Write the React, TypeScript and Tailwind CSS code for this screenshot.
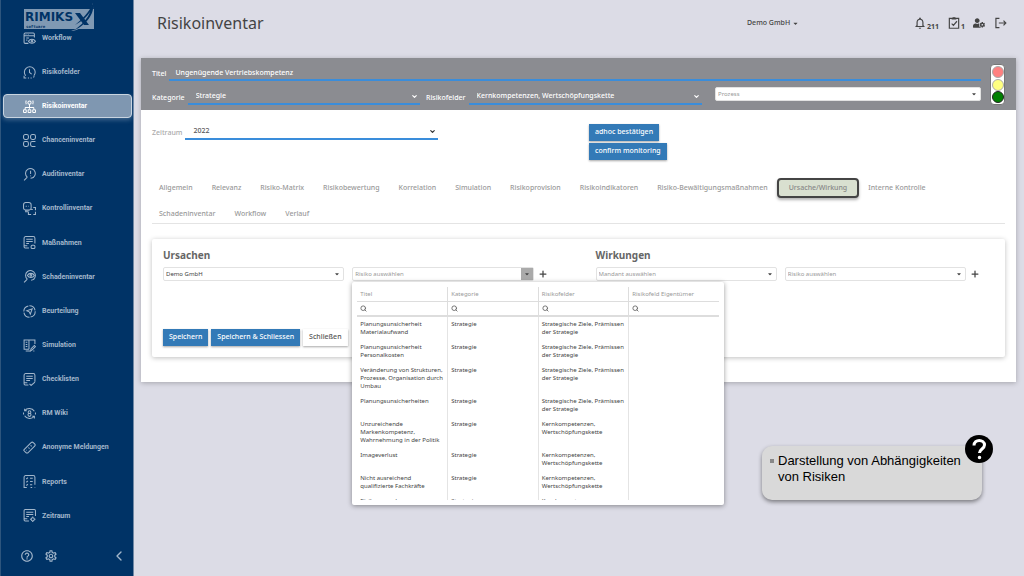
import { useState } from "react";
import type { ReactNode } from "react";
import { FaCaretDown, FaUserCog } from "react-icons/fa";
import { LuChevronDown, LuChevronLeft, LuPlus, LuSearch } from "react-icons/lu";
import {
  MdHelpOutline,
  MdNotificationsNone,
  MdOutlineSettings,
} from "react-icons/md";

const menu: { label: string; icon: ReactNode }[] = [
  {
    label: "Workflow",
    icon: (
      <>
        <path d="M10 21H4a2 2 0 0 1-2-2V4a2 2 0 0 1 2-2h15a2 2 0 0 1 2 2v6M2 7h19M5 4.6h1M9 4.6h1M6 11h5M6 15h2" />
        <path d="M10 17c3-5 10-5 13 0-3 5-10 5-13 0z" />
        <circle cx="16.500" cy="17" r="1.500" />
      </>
    ),
  },
  {
    label: "Risikofelder",
    icon: (
      <>
        <path d="M5 18a10 10 0 1 1 15 0M12 6v6l4 3M2 18v4h4M9 22h2M14 22h2M19 21l2-2" />
      </>
    ),
  },
  {
    label: "Risikoinventar",
    icon: (
      <>
        <circle cx="12" cy="5" r="3" />
        <path d="M6 1c-1 2-1 5 0 7M18 1c1 2 1 5 0 7M12 8v8M4 17v-2q0-1 1-1h14q1 0 1 1v2" />
        <rect x="1" y="18" width="5" height="5" rx="1" />
        <rect x="9.500" y="18" width="5" height="5" rx="1" />
        <rect x="18" y="18" width="5" height="5" rx="1" />
      </>
    ),
  },
  {
    label: "Chanceninventar",
    icon: (
      <>
        <rect x="1" y="1" width="9" height="9" rx="3" />
        <rect x="14" y="1" width="9" height="9" rx="3" />
        <rect x="1" y="14" width="9" height="9" rx="3" />
        <path d="M23 14h-6a3 3 0 0 0-3 3v3a3 3 0 0 0 3 3h6" />
      </>
    ),
  },
  {
    label: "Auditinventar",
    icon: (
      <>
        <path d="M8 17a9 9 0 1 1 6 2M8 17l-6 6M14 5v6M14 14v1M19 18l1-1" />
      </>
    ),
  },
  {
    label: "Kontrollinventar",
    icon: (
      <>
        <rect x="1" y="1" width="14" height="14" rx="4" />
        <path d="M5 15v3h5M19 10h4v5M23 18v5h-4M15 23h-5v-5M5 8h2M10 8h1M15 14h3" />
      </>
    ),
  },
  {
    label: "Maßnahmen",
    icon: (
      <>
        <path d="M11 22H4a2 2 0 0 1-2-2V4a3 3 0 0 1 3-3h14a3 3 0 0 1 3 3v10M6 6h12M6 10h12M6 14h5M2 18h6" />
        <rect x="15" y="17" width="7" height="6" rx="2" />
      </>
    ),
  },
  {
    label: "Schadeninventar",
    icon: (
      <>
        <path d="M8 17a9 9 0 1 1 7 2M8 17l-6 6M19 18l2-2" />
        <path d="M8 10c3-5 10-5 13 0-3 5-10 5-13 0z" />
        <circle cx="14.500" cy="10" r="1.500" />
      </>
    ),
  },
  {
    label: "Beurteilung",
    icon: (
      <>
        <circle cx="12" cy="12" r="10.500" strokeDasharray="14 2" />
        <path d="M17 7l-3.500 10-2-4.500L7 10.500z" />
      </>
    ),
  },
  {
    label: "Simulation",
    icon: (
      <>
        <path d="M11 2v17M11 19H2V2h9M11 2h11v7M5 6h3M5 10h3M5 14h3M5 22h8" />
        <path d="M14 22l1-4 6-6 2 2-6 6zM19 22h2" />
      </>
    ),
  },
  {
    label: "Checklisten",
    icon: (
      <>
        <path d="M10 22H4a2 2 0 0 1-2-2V4a3 3 0 0 1 3-3h14a3 3 0 0 1 3 3v12M6 6h12M6 10h12M6 14h7M2 18h6M12 20l3 3 7-6" />
      </>
    ),
  },
  {
    label: "RM Wiki",
    icon: (
      <>
        <path d="M3 7a11 11 0 0 1 18 1M21 17a11 11 0 0 1-18-1M1 10v4M23 10v4M3 3v4h4M21 21v-4h-4" />
        <circle cx="12" cy="9.500" r="2.500" />
        <circle cx="12" cy="14.500" r="2.800" />
      </>
    ),
  },
  {
    label: "Anonyme Meldungen",
    icon: (
      <>
        <path d="M2 16L15 3q2-2 4 0l2.500 2.500q2 2 0 4L9 22q-2 1-4-1l-3-3q-1-1 0-2zM14 8l2 2M10 12l2 2M6 17h1" />
      </>
    ),
  },
  {
    label: "Reports",
    icon: (
      <>
        <path d="M7 23H2V4a3 3 0 0 1 3-3h14a3 3 0 0 1 3 3v14M22 22v1M14 23h3M6 6l1 1 2-2M13 6h5M6 12l1 1 2-2M13 12h5M6 18l1 1 2-2M13 18h4" />
      </>
    ),
  },
  {
    label: "Zeitraum",
    icon: (
      <>
        <path d="M11 22H4a2 2 0 0 1-2-2V3a2 2 0 0 1 2-2h17a2 2 0 0 1 2 2v10M6 6h13M6 10h13M6 14h5M2 18h6" />
        <circle cx="18" cy="19" r="3" />
        <path d="M18 14v2M18 22v2M13 19h2M21 19h2" />
      </>
    ),
  },
];

const tabs = [
  "Allgemein",
  "Relevanz",
  "Risiko-Matrix",
  "Risikobewertung",
  "Korrelation",
  "Simulation",
  "Risikoprovision",
  "Risikoindikatoren",
  "Risiko-Bewältigungsmaßnahmen",
  "Ursache/Wirkung",
  "Interne Kontrolle",
  "Schadeninventar",
  "Workflow",
  "Verlauf",
];

const columns = ["Titel", "Kategorie", "Risikofelder", "Risikofeld Eigentümer"];

const risks = [
  ["Planungsunsicherheit Materialaufwand", "Strategie", "Strategische Ziele, Prämissen der Strategie"],
  ["Planungsunsicherheit Personalkosten", "Strategie", "Strategische Ziele, Prämissen der Strategie"],
  ["Veränderung von Strukturen, Prozesse, Organisation durch Umbau", "Strategie", "Strategische Ziele, Prämissen der Strategie"],
  ["Planungsunsicherheiten", "Strategie", "Strategische Ziele, Prämissen der Strategie"],
  ["Unzureichende Markenkompetenz, Wahrnehmung in der Politik", "Strategie", "Kernkompetenzen, Wertschöpfungskette"],
  ["Imageverlust", "Strategie", "Kernkompetenzen, Wertschöpfungskette"],
  ["Nicht ausreichend qualifizierte Fachkräfte", "Strategie", "Kernkompetenzen, Wertschöpfungskette"],
  ["Risiken aus der Einflussnahme", "Strategie", "Kernkompetenzen, Wertschöpfungskette"],
];

const Logo = () => (
  <svg viewBox="0 0 72 30" className="h-[30px] w-18 shrink-0" role="img" aria-label="RIMIKSX software">
    <rect y="6" width="70" height="20" fill="#8099b3" />
    <text x="1" y="18" fontFamily="DejaVu Sans" fontWeight="700" fontSize="12" fill="#003366">
      RIMIKS
    </text>
    <text x="2" y="25" fontFamily="DejaVu Sans Mono" fontWeight="700" fontSize="4" fill="#003366">
      software
    </text>
    <path d="M47 28C58 25 69 12 68 0c4 8-3 19-10 24-3 2-7 4-11 4z" fill="#8099b3" />
    <path d="M51 10h5l9 12h-5z" fill="#003366" />
    <path d="M69 0c2 11-7 22-20 28 9-6 15-13 17-19-3 5-8 9-15 13 7-6 14-12 18-22z" fill="#003366" />
  </svg>
);

const Sidebar = () => {
  const [active, setActive] = useState("Risikoinventar");

  return (
    <aside className="flex min-h-screen w-[134px] shrink-0 flex-col border-r border-l border-l-[#2d557d] border-r-[#7088a4] bg-[#003366] text-[#a3b7cb]">
      <div className="flex h-[26px] items-start pl-[23px] pt-[3px]">
        <Logo />
      </div>
      <nav className="flex flex-1 flex-col justify-between pr-px pl-0.5">
        {menu.map((item) => (
          <a
            key={item.label}
            href="#"
            onClick={() => setActive(item.label)}
            className={`flex h-6 items-center gap-1.5 rounded border pl-[19px] font-[Roboto,sans-serif] text-[7px] font-bold ${
              active === item.label
                ? "border-[#c8d4e0] bg-[#7f97b1] text-white shadow-[0_2px_4px_rgba(160,180,200,0.4)]"
                : "border-transparent"
            }`}
          >
            <svg
              viewBox="0 0 24 24"
              fill="none"
              stroke="currentColor"
              strokeWidth="1.900"
              className="size-[13px] shrink-0"
            >
              {item.icon}
            </svg>
            <span>{item.label}</span>
          </a>
        ))}
      </nav>
      <div className="flex h-12 items-center gap-2.5 pt-2 pr-1.5 pl-[19px]">
        <button aria-label="Hilfe">
          <MdHelpOutline className="size-3.5" />
        </button>
        <button aria-label="Einstellungen">
          <MdOutlineSettings className="size-3.5" />
        </button>
        <button aria-label="Menü einklappen" className="ml-auto">
          <LuChevronLeft className="size-4" />
        </button>
      </div>
    </aside>
  );
};

const TopBar = () => (
  <header className="flex h-[58px] items-start pt-[11px] pr-[9px] pl-4 text-[#444]">
    <h1 className="w-[590px] text-[16px] leading-6">Risikoinventar</h1>
    <button className="flex h-6 items-center gap-0.5 text-[7px] font-medium">
      Demo GmbH <FaCaretDown className="size-[7px]" />
    </button>
    <div className="ml-auto flex h-6 items-center gap-2">
      <button className="flex items-center" aria-label="211 Benachrichtigungen">
        <MdNotificationsNone className="size-3.5" />
        <span className="pt-2 text-[7px] font-bold">211</span>
      </button>
      <button className="flex items-center" aria-label="1 Aufgabe">
        <svg viewBox="0 0 24 24" fill="none" stroke="currentColor" strokeWidth="2" className="size-3.5">
          <path d="M4 4h16v17H4zM8 13l3 3 6-7" />
          <path d="M8 5l2-3h4l2 3v1H8z" fill="currentColor" stroke="none" />
        </svg>
        <span className="pt-2 text-[7px] font-bold">1</span>
      </button>
      <button aria-label="Benutzer">
        <FaUserCog className="size-3" />
      </button>
      <button aria-label="Abmelden">
        <svg viewBox="0 0 24 24" fill="none" stroke="currentColor" strokeWidth="2" className="size-3.5">
          <path d="M11 4H5v16h6M10 12h12M18 8l4 4-4 4" />
        </svg>
      </button>
    </div>
  </header>
);

type LineSelectProps = { id: string; label: string; value: string };

const LineSelect = ({ id, label, value }: LineSelectProps) => (
  <div className="flex items-end gap-[3px]">
    <label htmlFor={id} className="pb-px text-[7px] leading-3 font-medium">
      {label}
    </label>
    <div className="relative flex-1">
      <select
        id={id}
        className="block h-[18px] w-full appearance-none border-b-2 border-[#3a8ddb] px-2 pt-0.5 text-[7px] font-medium outline-none"
      >
        <option>{value}</option>
      </select>
      <LuChevronDown className="pointer-events-none absolute top-1.5 right-0.5 size-[7px]" strokeWidth={4} />
    </div>
  </div>
);

type BoxSelectProps = { label: string; value: string; filled?: boolean; open?: boolean };

const BoxSelect = ({ label, value, filled, open }: BoxSelectProps) => (
  <div className="relative flex-1">
    <select
      aria-label={label}
      className={`block h-3.5 w-full appearance-none rounded-xs border border-[#e2e2e2] bg-white px-0.5 text-[6px] outline-none ${
        filled ? "text-[#444]" : "text-[#999]"
      }`}
    >
      <option>{value}</option>
    </select>
    <span
      className={`pointer-events-none absolute top-px right-px flex h-3 w-3 items-center justify-center text-[#444] ${
        open ? "bg-[#aaa]" : ""
      }`}
    >
      <FaCaretDown className="size-1.5" />
    </span>
  </div>
);

const RiskHeader = () => (
  <div className="flex gap-[9px] bg-[#8b8c91] pt-1.5 pr-[11px] pb-[5px] pl-[11px] text-white">
    <div className="flex flex-1 flex-col gap-1.5">
      <div className="flex items-end gap-[3px]">
        <label htmlFor="titel" className="pb-px text-[7px] leading-3 font-medium">
          Titel
        </label>
        <input
          id="titel"
          defaultValue="Ungenügende Vertriebskompetenz"
          className="h-[17px] flex-1 border-b-2 border-[#3a8ddb] px-1.5 pt-0.5 text-[7px] font-medium outline-none"
        />
      </div>
      <div className="grid grid-cols-[268fr_276fr_273fr] gap-x-1.5">
        <LineSelect id="kategorie" label="Kategorie" value="Strategie" />
        <LineSelect id="risikofelder" label="Risikofelder" value="Kernkompetenzen, Wertschöpfungskette" />
        <div className="flex items-start pl-[7px]">
          <BoxSelect label="Prozess" value="Prozess" />
        </div>
      </div>
    </div>
    <div className="flex w-[15px] flex-col items-center justify-between rounded border border-[#777] bg-white py-px">
      <span className="size-3 rounded-full border border-[#aaa] bg-[#ff8080]" />
      <span className="size-3 rounded-full border border-[#aaa] bg-[#ffff80]" />
      <span className="size-3 rounded-full border border-[#222] bg-[#008000]" />
    </div>
  </div>
);

const blueButton =
  "h-[17px] bg-[#337ab7] px-[6px] text-[7px] font-medium text-white shadow-[0_1px_2px_rgba(0,0,0,0.35)]";

const RiskPopup = () => (
  <div className="absolute top-full left-0 z-10 mt-px w-[372px] rounded-xs bg-white px-[5px] pt-[5px] pb-[5px] shadow-[0_1px_5px_rgba(0,0,0,0.4)]">
    <div className="h-[213px] overflow-hidden">
      <table className="w-full table-fixed border-collapse text-left text-[6px] leading-2 text-[#444]">
        <thead>
          <tr className="h-3.5 border-b border-[#ddd] text-[#999]">
            {columns.map((column) => (
              <th key={column} className="border-r border-[#ddd] px-[3px] font-normal last:border-r-0">
                {column}
              </th>
            ))}
          </tr>
          <tr className="h-[15px] border-b-2 border-[#ddd]">
            {columns.map((column) => (
              <td key={column} className="border-r border-[#ddd] px-[3px] last:border-r-0">
                <button aria-label={`${column} suchen`} className="block text-[#666]">
                  <LuSearch className="size-[7px]" strokeWidth={3} />
                </button>
              </td>
            ))}
          </tr>
        </thead>
        <tbody>
          {risks.map(([title, category, field]) => (
            <tr key={title} className="align-top">
              <td className="border-r border-[#e4e4e4] px-[3px] pt-[3px] pb-1">{title}</td>
              <td className="border-r border-[#e4e4e4] px-[3px] pt-[3px] pb-1">{category}</td>
              <td className="border-r border-[#e4e4e4] px-[3px] pt-[3px] pb-1">{field}</td>
              <td />
            </tr>
          ))}
        </tbody>
      </table>
    </div>
  </div>
);

const CausePanel = () => (
  <section className="rounded-xs bg-white pt-2 pr-[25px] pb-[11px] pl-[11px] shadow-[0_1px_5px_rgba(0,0,0,0.25)]">
    <div className="grid grid-cols-2 gap-12">
      <div>
        <h2 className="text-[10px] leading-4 font-bold text-[#666]">Ursachen</h2>
        <div className="mt-1 flex items-center gap-2">
          <BoxSelect label="Mandant der Ursache" value="Demo GmbH" filled />
          <div className="relative flex flex-1">
            <BoxSelect label="Risiko der Ursache" value="Risiko auswählen" open />
            <RiskPopup />
          </div>
          <button aria-label="Ursache hinzufügen" className="-ml-1">
            <LuPlus className="size-2.5" strokeWidth={3} />
          </button>
        </div>
      </div>
      <div>
        <h2 className="text-[10px] leading-4 font-bold text-[#666]">Wirkungen</h2>
        <div className="mt-1 flex items-center gap-2">
          <BoxSelect label="Mandant der Wirkung" value="Mandant auswählen" />
          <BoxSelect label="Risiko der Wirkung" value="Risiko auswählen" />
          <button aria-label="Wirkung hinzufügen" className="-ml-1">
            <LuPlus className="size-2.5" strokeWidth={3} />
          </button>
        </div>
      </div>
    </div>
    <div className="mt-12 flex gap-[3px]">
      <button className={blueButton}>Speichern</button>
      <button className={blueButton}>Speichern &amp; Schliessen</button>
      <button className="h-[17px] bg-white px-[6px] text-[7px] font-medium text-[#555] shadow-[0_1px_2px_rgba(0,0,0,0.35)]">
        Schließen
      </button>
    </div>
  </section>
);

const Hint = () => (
  <div className="relative mt-16 mr-[34px] mb-4 w-[220px] self-end rounded-[10px] bg-[#d9d9d9] pt-[7px] pr-2 pb-[15px] pl-4 text-black shadow-[0_2px_4px_rgba(0,0,0,0.45)]">
    <ul className="list-none font-['Liberation_Sans',sans-serif] text-[13px] leading-4">
      <li className="relative">
        <span className="absolute top-1.5 -left-2 size-1 bg-[#888]" />
        Darstellung von Abhängigkeiten von Risiken
      </li>
    </ul>
    <span className="absolute -top-[11px] -right-[11px] flex size-7 items-center justify-center rounded-full bg-black">
      <svg viewBox="0 0 24 24" fill="none" stroke="#fff" strokeWidth="3" className="size-6">
        <path d="M7 8.500c0-7 10.500-6.500 10.500-.5 0 4-5 4-5 8" />
        <circle cx="12.500" cy="20.500" r="1" fill="#fff" strokeWidth="1.500" />
      </svg>
    </span>
  </div>
);

const App = () => {
  const [activeTab, setActiveTab] = useState("Ursache/Wirkung");

  return (
    <div className="flex min-h-screen bg-[#dcdce6] font-['Noto_Sans',sans-serif] text-[#444]">
      <Sidebar />
      <div className="flex min-w-0 flex-1 flex-col pr-2 pl-[7px]">
        <TopBar />
        <main className="flex flex-col">
          <div className="bg-white shadow-[0_1px_5px_rgba(0,0,0,0.25)]">
            <RiskHeader />
            <div className="px-[11px] pb-[25px]">
              <div className="grid grid-cols-[437fr_416fr] pt-3.5">
                <div className="-mt-0.5 w-[286px] text-[#aaa] [&_select]:text-[#555] [&_svg]:text-[#333]">
                  <LineSelect id="zeitraum" label="Zeitraum" value="2022" />
                </div>
                <div className="flex flex-col items-start gap-0.5">
                  <button className={blueButton}>adhoc bestätigen</button>
                  <button className={blueButton}>confirm monitoring</button>
                </div>
              </div>
              <div className="mt-[18px] flex flex-wrap items-center gap-x-[5px] gap-y-[7px] border-b border-[#e4e4e4] pr-8 text-[7px] font-medium text-[#999]">
                {tabs.map((tab) => (
                  <button
                    key={tab}
                    onClick={() => setActiveTab(tab)}
                    className={
                      activeTab === tab
                        ? "-mx-[3px] h-5 rounded border-2 border-[#444] bg-[#d9e0d0] px-2.5 text-[#888] shadow-[0_2px_3px_rgba(0,0,0,0.3)]"
                        : "h-[18px] px-[7px]"
                    }
                  >
                    {tab}
                  </button>
                ))}
              </div>
              <div className="mt-[15px]">
                <CausePanel />
              </div>
            </div>
          </div>
          <Hint />
        </main>
      </div>
    </div>
  );
};

export default App;
